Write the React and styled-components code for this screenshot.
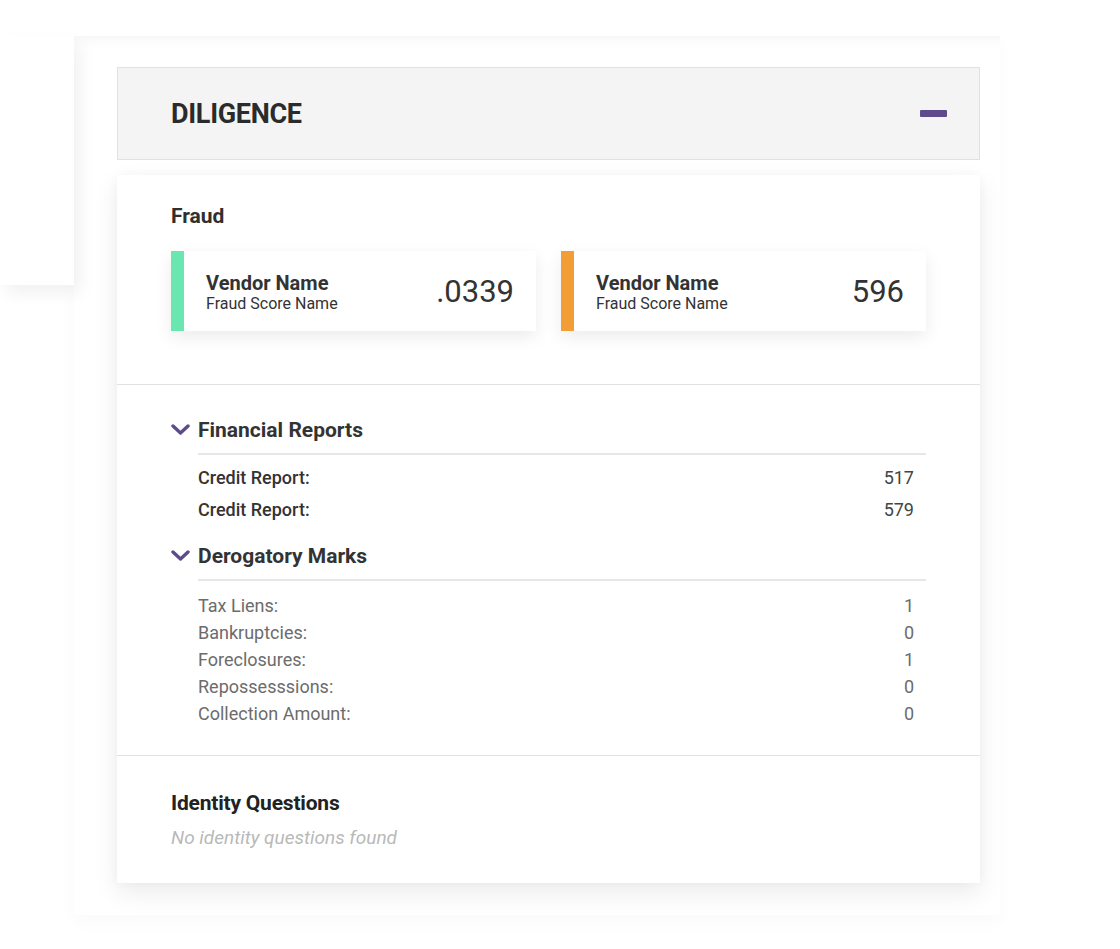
import React from 'react';
import styled, { createGlobalStyle } from 'styled-components';

const GlobalStyle = createGlobalStyle`
  body {
    margin: 0;
    background: #fff;
    font-family: Roboto, "Liberation Sans", Arial, sans-serif;
    color: #333;
  }
`;

const fraudScores = [
  { vendor: 'Vendor Name', score: 'Fraud Score Name', value: '.0339', color: '#6ae6b1' },
  { vendor: 'Vendor Name', score: 'Fraud Score Name', value: '596', color: '#f39d36' },
];

const financial = [
  { label: 'Credit Report:', value: '517' },
  { label: 'Credit Report:', value: '579' },
];

const derogatory = [
  { label: 'Tax Liens:', value: '1' },
  { label: 'Bankruptcies:', value: '0' },
  { label: 'Foreclosures:', value: '1' },
  { label: 'Repossesssions:', value: '0' },
  { label: 'Collection Amount:', value: '0' },
];

function Chevron() {
  return (
    <svg width="19" height="12" viewBox="0 0 19 12">
      <polyline points="2,2 9.5,9 17,2" fill="none" stroke="#5f4b8b" strokeWidth="3.4" strokeLinecap="round" strokeLinejoin="round" />
    </svg>
  );
}

function App() {
  return (
    <Page>
      <GlobalStyle />
      <SideCard />
      <Backdrop>
        <SectionHeader>
          <HeaderTitle>DILIGENCE</HeaderTitle>
          <Minus />
        </SectionHeader>

        <Card>
          <FraudSection>
            <SubTitle>Fraud</SubTitle>
            <ScoreRow>
              {fraudScores.map((s, i) => (
                <ScoreCard key={i} accent={s.color}>
                  <ScoreText>
                    <VendorName>{s.vendor}</VendorName>
                    <ScoreName>{s.score}</ScoreName>
                  </ScoreText>
                  <ScoreValue>{s.value}</ScoreValue>
                </ScoreCard>
              ))}
            </ScoreRow>
          </FraudSection>

          <ReportsSection>
            <Group>
              <GroupHeader>
                <Chevron />
                <GroupTitle>Financial Reports</GroupTitle>
              </GroupHeader>
              <GroupBody top="7px">
                {financial.map((r, i) => (
                  <DataRow key={i} height="32px">
                    <RowLabel strong>{r.label}</RowLabel>
                    <RowValue strong>{r.value}</RowValue>
                  </DataRow>
                ))}
              </GroupBody>
            </Group>
            <Group gap="16px">
              <GroupHeader>
                <Chevron />
                <GroupTitle>Derogatory Marks</GroupTitle>
              </GroupHeader>
              <GroupBody top="11px">
                {derogatory.map((r, i) => (
                  <DataRow key={i} height="27px">
                    <RowLabel>{r.label}</RowLabel>
                    <RowValue>{r.value}</RowValue>
                  </DataRow>
                ))}
              </GroupBody>
            </Group>
          </ReportsSection>

          <IdentitySection>
            <IdentityTitle>Identity Questions</IdentityTitle>
            <EmptyNote>No identity questions found</EmptyNote>
          </IdentitySection>
        </Card>
      </Backdrop>
    </Page>
  );
}

const Page = styled.div`
  display: flex;
  align-items: flex-start;
  padding-top: 36px;
  min-height: 913px;
`;

const SideCard = styled.div`
  width: 74px;
  height: 249px;
  flex: none;
  background: #fff;
  box-shadow: 6px 8px 16px rgba(0, 0, 0, 0.06);
  position: relative;
  z-index: 1;
`;

const Backdrop = styled.div`
  width: 863px;
  flex: none;
  padding: 31px 20px 32px 43px;
  background: #fff;
  box-shadow: inset 0 16px 14px -14px rgba(0, 0, 0, 0.05), 0 8px 18px rgba(0, 0, 0, 0.025);
`;

const SectionHeader = styled.div`
  height: 91px;
  display: flex;
  align-items: center;
  justify-content: space-between;
  padding: 0 32px 0 53px;
  background: #f4f4f4;
  border: 1px solid #e1e1e1;
`;

const HeaderTitle = styled.h2`
  margin: 0;
  font-size: 27px;
  font-weight: 700;
  letter-spacing: -0.3px;
  color: #2b2b2b;
`;

const Minus = styled.span`
  width: 27px;
  height: 7px;
  background: #5f4b8b;
  border-radius: 1px;
`;

const Card = styled.div`
  margin-top: 15px;
  background: #fff;
  box-shadow: 0 10px 24px rgba(0, 0, 0, 0.08), 0 0 10px rgba(0, 0, 0, 0.03);
`;

const FraudSection = styled.section`
  padding: 27px 54px 53px;
  border-bottom: 1px solid #e2e2e2;
`;

const SubTitle = styled.h3`
  margin: 0 0 21px;
  font-size: 21px;
  line-height: 28px;
  font-weight: 700;
  color: #2f2f2f;
`;

const ScoreRow = styled.div`
  display: grid;
  grid-template-columns: 1fr 1fr;
  gap: 25px;
`;

const ScoreCard = styled.div`
  height: 80px;
  display: flex;
  align-items: center;
  justify-content: space-between;
  padding: 0 22px 0 22px;
  background: #fff;
  border-left: 13px solid ${(p) => p.accent};
  box-shadow: 0 6px 16px rgba(0, 0, 0, 0.08);
`;

const ScoreText = styled.div`
  display: flex;
  flex-direction: column;
  padding-top: 3px;
`;

const VendorName = styled.span`
  font-size: 20px;
  line-height: 22px;
  font-weight: 700;
  color: #333;
`;

const ScoreName = styled.span`
  font-size: 16px;
  line-height: 20px;
  color: #333;
`;

const ScoreValue = styled.span`
  font-size: 31px;
  font-weight: 400;
  color: #333;
`;

const ReportsSection = styled.section`
  padding: 31px 54px 28px;
  border-bottom: 1px solid #e2e2e2;
`;

const Group = styled.div`
  margin-top: ${(p) => p.gap || 0};
`;

const GroupHeader = styled.div`
  display: flex;
  align-items: center;
  gap: 8px;
  height: 28px;
`;

const GroupTitle = styled.h4`
  margin: 0;
  flex: 1;
  font-size: 21px;
  font-weight: 700;
  color: #333;
`;

const GroupBody = styled.div`
  margin: 9px 0 0 27px;
  padding: ${(p) => p.top} 12px 0 0;
  border-top: 2px solid #e6e6e6;
`;

const DataRow = styled.div`
  display: flex;
  justify-content: space-between;
  height: ${(p) => p.height};
  line-height: ${(p) => p.height};
  font-size: 18px;
`;

const RowLabel = styled.span`
  font-weight: ${(p) => (p.strong ? 500 : 400)};
  color: ${(p) => (p.strong ? '#333' : '#6c6c6c')};
`;

const RowValue = styled.span`
  color: ${(p) => (p.strong ? '#444' : '#6c6c6c')};
`;

const IdentitySection = styled.section`
  padding: 34px 54px 33px;
`;

const IdentityTitle = styled.h3`
  margin: 0;
  font-size: 21px;
  line-height: 26px;
  font-weight: 700;
  letter-spacing: -0.2px;
  color: #222;
`;

const EmptyNote = styled.p`
  margin: 10px 0 0;
  font-size: 19px;
  line-height: 24px;
  font-style: italic;
  color: #b9b9b9;
`;

export default App;
